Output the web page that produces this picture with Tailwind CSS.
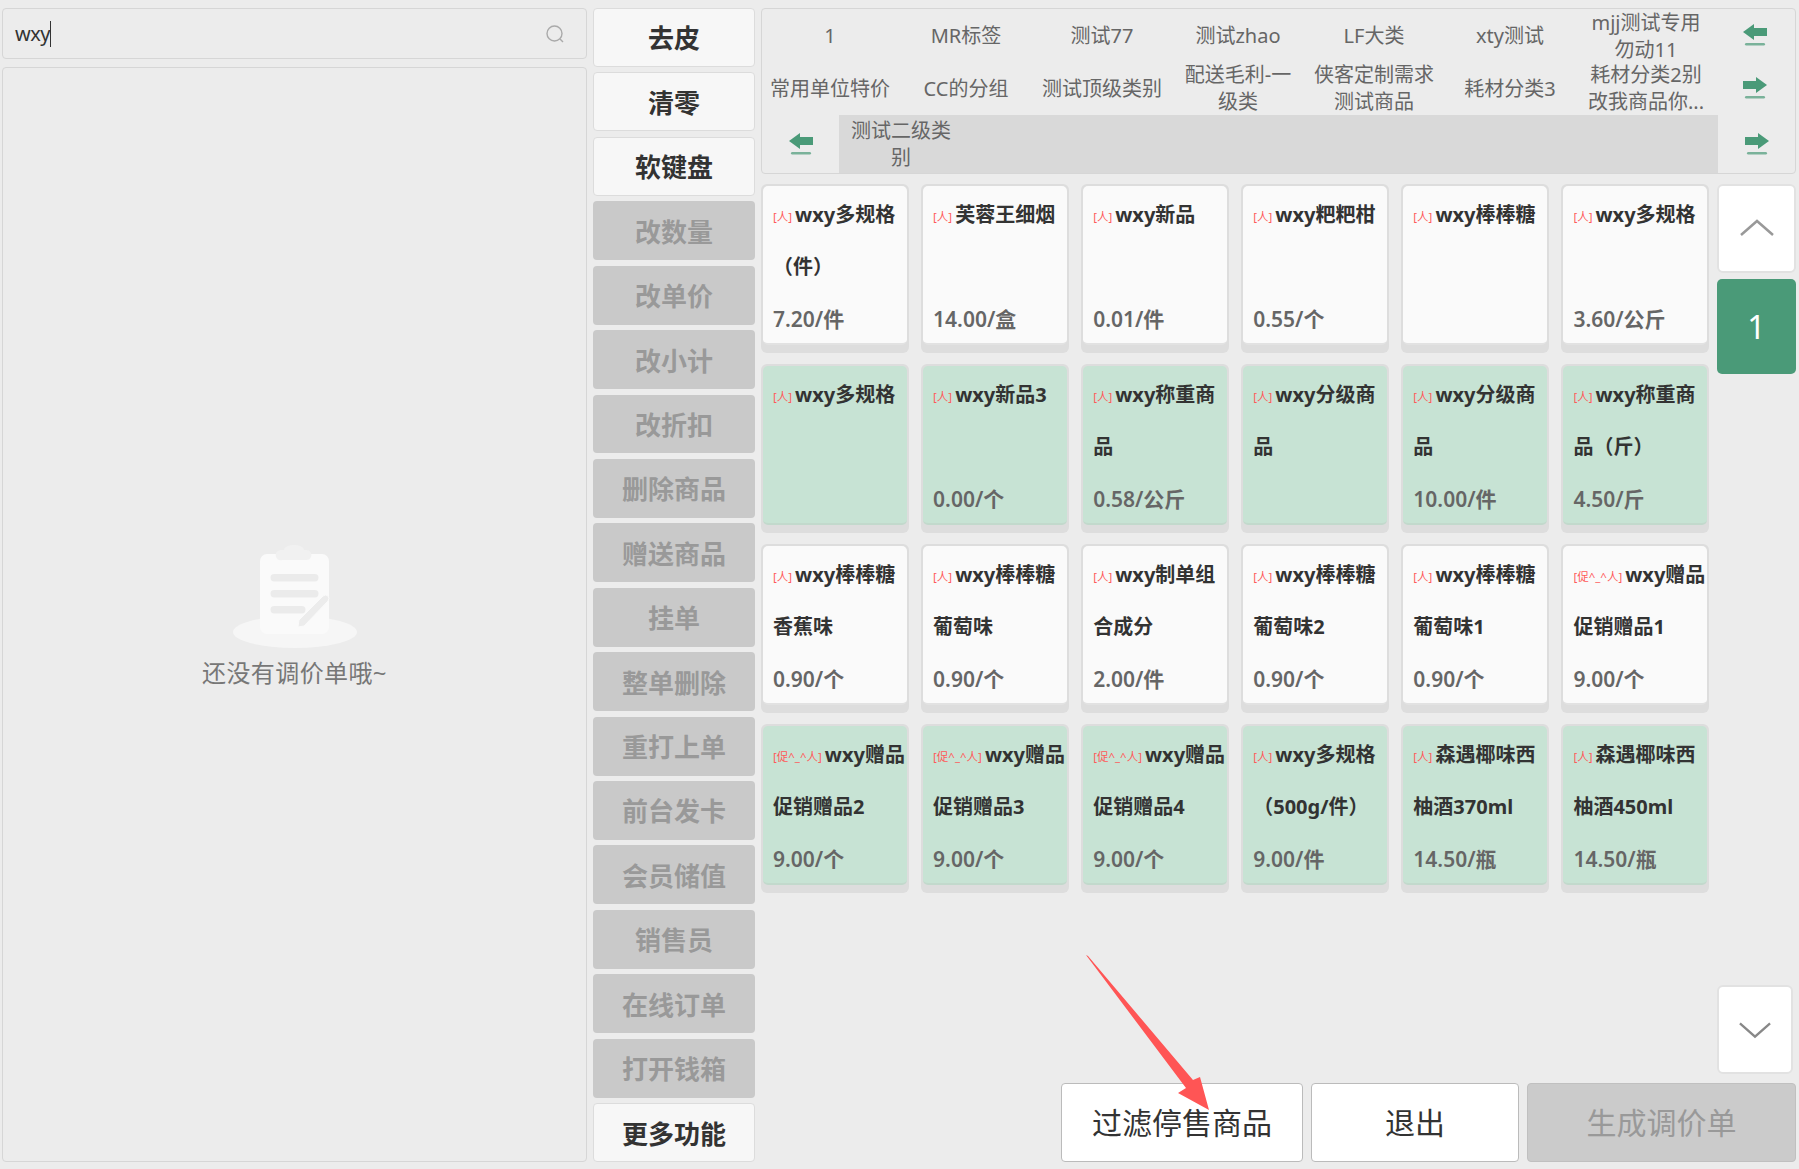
<!DOCTYPE html>
<html lang="zh-CN">
<head>
    <meta charset="UTF-8">
    <title>调价单</title>
    <script src="https://cdn.jsdelivr.net/npm/@tailwindcss/browser@4"></script>
</head>
<body class="bg-[#ececec] font-['Noto_Sans','Noto_Sans_CJK_SC',sans-serif] overflow-hidden">
    <div class="relative h-[1169px] w-[1799px] flex pl-[2px] pr-[3px] pt-[8px] pb-[7px] gap-[6px]">
        <!-- Left: search and order list -->
        <div class="w-[585px] flex flex-col gap-[8px]">
            <div class="h-[51px] flex items-center px-[12px] border border-[#d6d6d6] rounded-[4px]">
                <span class="text-[20px] text-[#333] tracking-[-0.5px]">wxy</span>
                <span class="w-px h-[26px] bg-[#333]"></span>
                <svg class="ml-auto mr-[9px] w-[20px] h-[20px]" viewBox="0 0 20 20" fill="none" stroke="#aaa" stroke-width="1.4">
                    <circle cx="9.5" cy="9.5" r="7.5"></circle>
                    <path d="M15 15l3 3"></path>
                </svg>
            </div>
            <div class="flex-1 flex flex-col items-center justify-center border border-[#d6d6d6] rounded-[4px] pt-[6px]">
                <svg class="w-[126px] h-[105px]" viewBox="0 0 126 105">
                    <ellipse cx="63" cy="87" rx="62" ry="16" fill="#f6f6f6"></ellipse>
                    <rect x="28" y="9" width="69" height="80" rx="7" fill="#fafafa"></rect>
                    <path d="M47 5a5 5 0 0 1 4-1h2a10 5 0 0 1 20 0h2a5 5 0 0 1 5 7a5 5 0 0 1-5 3H51a5 5 0 0 1-4-9z" fill="#f1f1f1" transform="translate(-1 1)"></path>
                    <rect x="38.500" y="29" width="48" height="7.500" rx="3.700" fill="#ebebeb"></rect>
                    <rect x="38.500" y="45" width="48" height="7.500" rx="3.700" fill="#ebebeb"></rect>
                    <rect x="38.500" y="61" width="35" height="7.500" rx="3.700" fill="#ebebeb"></rect>
                    <path d="M66 82l1-7 24-24q3-2 5 0t0 5L72 81z" fill="#ececec" stroke="#fafafa" stroke-width="1"></path>
                </svg>
                <p class="mt-[6px] text-[24px] leading-[34px] text-[#777] tracking-[0.4px]">还没有调价单哦~</p>
            </div>
        </div>

        <!-- Middle: function buttons -->
        <div class="w-[162px] grid grid-rows-18 gap-[5.5px] text-[26px] font-bold *:pt-[3px]">
            <button class="border border-[#dcdcdc] rounded-[4px] bg-[#f7f7f7] text-[#333]">去皮</button>
            <button class="border border-[#dcdcdc] rounded-[4px] bg-[#f7f7f7] text-[#333]">清零</button>
            <button class="border border-[#dcdcdc] rounded-[4px] bg-[#f7f7f7] text-[#333]">软键盘</button>
            <button class="rounded-[4px] bg-[#c9c9c9] text-[#999]">改数量</button>
            <button class="rounded-[4px] bg-[#c9c9c9] text-[#999]">改单价</button>
            <button class="rounded-[4px] bg-[#c9c9c9] text-[#999]">改小计</button>
            <button class="rounded-[4px] bg-[#c9c9c9] text-[#999]">改折扣</button>
            <button class="rounded-[4px] bg-[#c9c9c9] text-[#999]">删除商品</button>
            <button class="rounded-[4px] bg-[#c9c9c9] text-[#999]">赠送商品</button>
            <button class="rounded-[4px] bg-[#c9c9c9] text-[#999]">挂单</button>
            <button class="rounded-[4px] bg-[#c9c9c9] text-[#999]">整单删除</button>
            <button class="rounded-[4px] bg-[#c9c9c9] text-[#999]">重打上单</button>
            <button class="rounded-[4px] bg-[#c9c9c9] text-[#999]">前台发卡</button>
            <button class="rounded-[4px] bg-[#c9c9c9] text-[#999]">会员储值</button>
            <button class="rounded-[4px] bg-[#c9c9c9] text-[#999]">销售员</button>
            <button class="rounded-[4px] bg-[#c9c9c9] text-[#999]">在线订单</button>
            <button class="rounded-[4px] bg-[#c9c9c9] text-[#999]">打开钱箱</button>
            <button class="border border-[#dcdcdc] rounded-[4px] bg-[#f7f7f7] text-[#333]">更多功能</button>
        </div>

        <!-- Right: categories, products, actions -->
        <div class="flex-1 flex flex-col min-w-0">
            <div class="h-[166px] flex flex-col border border-[#d6d6d6] rounded-[4px] overflow-hidden text-[20px] leading-[27px] text-[#666] text-center">
                <div class="h-[53px] flex items-center">
                    <div class="w-[136px]">1</div>
                    <div class="w-[136px]">MR标签</div>
                    <div class="w-[136px]">测试77</div>
                    <div class="w-[136px]">测试zhao</div>
                    <div class="w-[136px]">LF大类</div>
                    <div class="w-[136px]">xty测试</div>
                    <div class="w-[136px]">mjj测试专用<br>勿动11</div>
                    <div class="flex-1 flex justify-center">
                        <svg class="w-[24px] h-[23px]" viewBox="0 0 24 23" fill="#4a9a78"><path d="M0 8L11 0v4h13v8H11v4z"></path><rect x="2" y="19" width="20" height="2.500" rx="1.200" opacity=".7"></rect></svg>
                    </div>
                </div>
                <div class="h-[52px] flex items-center">
                    <div class="w-[136px]">常用单位特价</div>
                    <div class="w-[136px]">CC的分组</div>
                    <div class="w-[136px]">测试顶级类别</div>
                    <div class="w-[136px]">配送毛利-一<br>级类</div>
                    <div class="w-[136px]">侠客定制需求<br>测试商品</div>
                    <div class="w-[136px]">耗材分类3</div>
                    <div class="w-[136px]">耗材分类2别<br>改我商品你...</div>
                    <div class="flex-1 flex justify-center">
                        <svg class="w-[24px] h-[23px]" viewBox="0 0 24 23" fill="#4a9a78"><path d="M24 8L13 0v4H0v8h13v4z"></path><rect x="2" y="19" width="20" height="2.500" rx="1.200" opacity=".7"></rect></svg>
                    </div>
                </div>
                <div class="flex-1 flex items-center mt-[1px]">
                    <div class="w-[77px] flex justify-center">
                        <svg class="w-[24px] h-[23px]" viewBox="0 0 24 23" fill="#4a9a78"><path d="M0 8L11 0v4h13v8H11v4z"></path><rect x="2" y="19" width="20" height="2.500" rx="1.200" opacity=".7"></rect></svg>
                    </div>
                    <div class="w-[879px] self-stretch bg-[#d9d9d9] flex items-center">
                        <div class="w-[124px]">测试二级类<br>别</div>
                    </div>
                    <div class="flex-1 flex justify-center">
                        <svg class="w-[24px] h-[23px]" viewBox="0 0 24 23" fill="#4a9a78"><path d="M24 8L13 0v4H0v8h13v4z"></path><rect x="2" y="19" width="20" height="2.500" rx="1.200" opacity=".7"></rect></svg>
                    </div>
                </div>
            </div>

            <div class="flex-1 flex mt-[10px] pb-[9px] gap-[8px] min-h-0">
                <div class="w-[948px] grid grid-cols-6 gap-x-[12.5px] gap-y-[11px] content-start">
                    <div class="h-[169px] bg-[#dddddd] rounded-[6px] px-[2px] pt-[2px] pb-[8px]"><div class="h-full rounded-[5px] bg-[#fafafa] border-b-2 border-[#e2e2e2] pl-[10px] pt-[4px] text-[20px] whitespace-nowrap text-[#333] font-bold"><div class="h-[103px] leading-[50px]"><span class="mr-[3px] align-[1px] text-[11.5px] font-normal text-[#ff5a5a]">[人]</span>wxy多规格<br>（件）</div><div class="leading-[52px] text-[21px] font-semibold text-[#666]">7.20/件</div></div></div>
                    <div class="h-[169px] bg-[#dddddd] rounded-[6px] px-[2px] pt-[2px] pb-[8px]"><div class="h-full rounded-[5px] bg-[#fafafa] border-b-2 border-[#e2e2e2] pl-[10px] pt-[4px] text-[20px] whitespace-nowrap text-[#333] font-bold"><div class="h-[103px] leading-[50px]"><span class="mr-[3px] align-[1px] text-[11.5px] font-normal text-[#ff5a5a]">[人]</span>芙蓉王细烟</div><div class="leading-[52px] text-[21px] font-semibold text-[#666]">14.00/盒</div></div></div>
                    <div class="h-[169px] bg-[#dddddd] rounded-[6px] px-[2px] pt-[2px] pb-[8px]"><div class="h-full rounded-[5px] bg-[#fafafa] border-b-2 border-[#e2e2e2] pl-[10px] pt-[4px] text-[20px] whitespace-nowrap text-[#333] font-bold"><div class="h-[103px] leading-[50px]"><span class="mr-[3px] align-[1px] text-[11.5px] font-normal text-[#ff5a5a]">[人]</span>wxy新品</div><div class="leading-[52px] text-[21px] font-semibold text-[#666]">0.01/件</div></div></div>
                    <div class="h-[169px] bg-[#dddddd] rounded-[6px] px-[2px] pt-[2px] pb-[8px]"><div class="h-full rounded-[5px] bg-[#fafafa] border-b-2 border-[#e2e2e2] pl-[10px] pt-[4px] text-[20px] whitespace-nowrap text-[#333] font-bold"><div class="h-[103px] leading-[50px]"><span class="mr-[3px] align-[1px] text-[11.5px] font-normal text-[#ff5a5a]">[人]</span>wxy粑粑柑</div><div class="leading-[52px] text-[21px] font-semibold text-[#666]">0.55/个</div></div></div>
                    <div class="h-[169px] bg-[#dddddd] rounded-[6px] px-[2px] pt-[2px] pb-[8px]"><div class="h-full rounded-[5px] bg-[#fafafa] border-b-2 border-[#e2e2e2] pl-[10px] pt-[4px] text-[20px] whitespace-nowrap text-[#333] font-bold"><div class="h-[103px] leading-[50px]"><span class="mr-[3px] align-[1px] text-[11.5px] font-normal text-[#ff5a5a]">[人]</span>wxy棒棒糖</div></div></div>
                    <div class="h-[169px] bg-[#dddddd] rounded-[6px] px-[2px] pt-[2px] pb-[8px]"><div class="h-full rounded-[5px] bg-[#fafafa] border-b-2 border-[#e2e2e2] pl-[10px] pt-[4px] text-[20px] whitespace-nowrap text-[#333] font-bold"><div class="h-[103px] leading-[50px]"><span class="mr-[3px] align-[1px] text-[11.5px] font-normal text-[#ff5a5a]">[人]</span>wxy多规格</div><div class="leading-[52px] text-[21px] font-semibold text-[#666]">3.60/公斤</div></div></div>

                    <div class="h-[169px] bg-[#dddddd] rounded-[6px] px-[2px] pt-[2px] pb-[8px]"><div class="h-full rounded-[5px] bg-[#c7e3d4] border-b-2 border-[#c2d9cc] pl-[10px] pt-[4px] text-[20px] whitespace-nowrap text-[#333] font-bold"><div class="h-[103px] leading-[50px]"><span class="mr-[3px] align-[1px] text-[11.5px] font-normal text-[#ff5a5a]">[人]</span>wxy多规格</div></div></div>
                    <div class="h-[169px] bg-[#dddddd] rounded-[6px] px-[2px] pt-[2px] pb-[8px]"><div class="h-full rounded-[5px] bg-[#c7e3d4] border-b-2 border-[#c2d9cc] pl-[10px] pt-[4px] text-[20px] whitespace-nowrap text-[#333] font-bold"><div class="h-[103px] leading-[50px]"><span class="mr-[3px] align-[1px] text-[11.5px] font-normal text-[#ff5a5a]">[人]</span>wxy新品3</div><div class="leading-[52px] text-[21px] font-semibold text-[#666]">0.00/个</div></div></div>
                    <div class="h-[169px] bg-[#dddddd] rounded-[6px] px-[2px] pt-[2px] pb-[8px]"><div class="h-full rounded-[5px] bg-[#c7e3d4] border-b-2 border-[#c2d9cc] pl-[10px] pt-[4px] text-[20px] whitespace-nowrap text-[#333] font-bold"><div class="h-[103px] leading-[50px]"><span class="mr-[3px] align-[1px] text-[11.5px] font-normal text-[#ff5a5a]">[人]</span>wxy称重商<br>品</div><div class="leading-[52px] text-[21px] font-semibold text-[#666]">0.58/公斤</div></div></div>
                    <div class="h-[169px] bg-[#dddddd] rounded-[6px] px-[2px] pt-[2px] pb-[8px]"><div class="h-full rounded-[5px] bg-[#c7e3d4] border-b-2 border-[#c2d9cc] pl-[10px] pt-[4px] text-[20px] whitespace-nowrap text-[#333] font-bold"><div class="h-[103px] leading-[50px]"><span class="mr-[3px] align-[1px] text-[11.5px] font-normal text-[#ff5a5a]">[人]</span>wxy分级商<br>品</div></div></div>
                    <div class="h-[169px] bg-[#dddddd] rounded-[6px] px-[2px] pt-[2px] pb-[8px]"><div class="h-full rounded-[5px] bg-[#c7e3d4] border-b-2 border-[#c2d9cc] pl-[10px] pt-[4px] text-[20px] whitespace-nowrap text-[#333] font-bold"><div class="h-[103px] leading-[50px]"><span class="mr-[3px] align-[1px] text-[11.5px] font-normal text-[#ff5a5a]">[人]</span>wxy分级商<br>品</div><div class="leading-[52px] text-[21px] font-semibold text-[#666]">10.00/件</div></div></div>
                    <div class="h-[169px] bg-[#dddddd] rounded-[6px] px-[2px] pt-[2px] pb-[8px]"><div class="h-full rounded-[5px] bg-[#c7e3d4] border-b-2 border-[#c2d9cc] pl-[10px] pt-[4px] text-[20px] whitespace-nowrap text-[#333] font-bold"><div class="h-[103px] leading-[50px]"><span class="mr-[3px] align-[1px] text-[11.5px] font-normal text-[#ff5a5a]">[人]</span>wxy称重商<br>品（斤）</div><div class="leading-[52px] text-[21px] font-semibold text-[#666]">4.50/斤</div></div></div>

                    <div class="h-[169px] bg-[#dddddd] rounded-[6px] px-[2px] pt-[2px] pb-[8px]"><div class="h-full rounded-[5px] bg-[#fafafa] border-b-2 border-[#e2e2e2] pl-[10px] pt-[4px] text-[20px] whitespace-nowrap text-[#333] font-bold"><div class="h-[103px] leading-[50px]"><span class="mr-[3px] align-[1px] text-[11.5px] font-normal text-[#ff5a5a]">[人]</span>wxy棒棒糖<br>香蕉味</div><div class="leading-[52px] text-[21px] font-semibold text-[#666]">0.90/个</div></div></div>
                    <div class="h-[169px] bg-[#dddddd] rounded-[6px] px-[2px] pt-[2px] pb-[8px]"><div class="h-full rounded-[5px] bg-[#fafafa] border-b-2 border-[#e2e2e2] pl-[10px] pt-[4px] text-[20px] whitespace-nowrap text-[#333] font-bold"><div class="h-[103px] leading-[50px]"><span class="mr-[3px] align-[1px] text-[11.5px] font-normal text-[#ff5a5a]">[人]</span>wxy棒棒糖<br>葡萄味</div><div class="leading-[52px] text-[21px] font-semibold text-[#666]">0.90/个</div></div></div>
                    <div class="h-[169px] bg-[#dddddd] rounded-[6px] px-[2px] pt-[2px] pb-[8px]"><div class="h-full rounded-[5px] bg-[#fafafa] border-b-2 border-[#e2e2e2] pl-[10px] pt-[4px] text-[20px] whitespace-nowrap text-[#333] font-bold"><div class="h-[103px] leading-[50px]"><span class="mr-[3px] align-[1px] text-[11.5px] font-normal text-[#ff5a5a]">[人]</span>wxy制单组<br>合成分</div><div class="leading-[52px] text-[21px] font-semibold text-[#666]">2.00/件</div></div></div>
                    <div class="h-[169px] bg-[#dddddd] rounded-[6px] px-[2px] pt-[2px] pb-[8px]"><div class="h-full rounded-[5px] bg-[#fafafa] border-b-2 border-[#e2e2e2] pl-[10px] pt-[4px] text-[20px] whitespace-nowrap text-[#333] font-bold"><div class="h-[103px] leading-[50px]"><span class="mr-[3px] align-[1px] text-[11.5px] font-normal text-[#ff5a5a]">[人]</span>wxy棒棒糖<br>葡萄味2</div><div class="leading-[52px] text-[21px] font-semibold text-[#666]">0.90/个</div></div></div>
                    <div class="h-[169px] bg-[#dddddd] rounded-[6px] px-[2px] pt-[2px] pb-[8px]"><div class="h-full rounded-[5px] bg-[#fafafa] border-b-2 border-[#e2e2e2] pl-[10px] pt-[4px] text-[20px] whitespace-nowrap text-[#333] font-bold"><div class="h-[103px] leading-[50px]"><span class="mr-[3px] align-[1px] text-[11.5px] font-normal text-[#ff5a5a]">[人]</span>wxy棒棒糖<br>葡萄味1</div><div class="leading-[52px] text-[21px] font-semibold text-[#666]">0.90/个</div></div></div>
                    <div class="h-[169px] bg-[#dddddd] rounded-[6px] px-[2px] pt-[2px] pb-[8px]"><div class="h-full rounded-[5px] bg-[#fafafa] border-b-2 border-[#e2e2e2] pl-[10px] pt-[4px] text-[20px] whitespace-nowrap text-[#333] font-bold"><div class="h-[103px] leading-[50px]"><span class="mr-[3px] align-[1px] text-[11.5px] font-normal text-[#ff5a5a]">[促^_^人]</span>wxy赠品<br>促销赠品1</div><div class="leading-[52px] text-[21px] font-semibold text-[#666]">9.00/个</div></div></div>

                    <div class="h-[169px] bg-[#dddddd] rounded-[6px] px-[2px] pt-[2px] pb-[8px]"><div class="h-full rounded-[5px] bg-[#c7e3d4] border-b-2 border-[#c2d9cc] pl-[10px] pt-[4px] text-[20px] whitespace-nowrap text-[#333] font-bold"><div class="h-[103px] leading-[50px]"><span class="mr-[3px] align-[1px] text-[11.5px] font-normal text-[#ff5a5a]">[促^_^人]</span>wxy赠品<br>促销赠品2</div><div class="leading-[52px] text-[21px] font-semibold text-[#666]">9.00/个</div></div></div>
                    <div class="h-[169px] bg-[#dddddd] rounded-[6px] px-[2px] pt-[2px] pb-[8px]"><div class="h-full rounded-[5px] bg-[#c7e3d4] border-b-2 border-[#c2d9cc] pl-[10px] pt-[4px] text-[20px] whitespace-nowrap text-[#333] font-bold"><div class="h-[103px] leading-[50px]"><span class="mr-[3px] align-[1px] text-[11.5px] font-normal text-[#ff5a5a]">[促^_^人]</span>wxy赠品<br>促销赠品3</div><div class="leading-[52px] text-[21px] font-semibold text-[#666]">9.00/个</div></div></div>
                    <div class="h-[169px] bg-[#dddddd] rounded-[6px] px-[2px] pt-[2px] pb-[8px]"><div class="h-full rounded-[5px] bg-[#c7e3d4] border-b-2 border-[#c2d9cc] pl-[10px] pt-[4px] text-[20px] whitespace-nowrap text-[#333] font-bold"><div class="h-[103px] leading-[50px]"><span class="mr-[3px] align-[1px] text-[11.5px] font-normal text-[#ff5a5a]">[促^_^人]</span>wxy赠品<br>促销赠品4</div><div class="leading-[52px] text-[21px] font-semibold text-[#666]">9.00/个</div></div></div>
                    <div class="h-[169px] bg-[#dddddd] rounded-[6px] px-[2px] pt-[2px] pb-[8px]"><div class="h-full rounded-[5px] bg-[#c7e3d4] border-b-2 border-[#c2d9cc] pl-[10px] pt-[4px] text-[20px] whitespace-nowrap text-[#333] font-bold"><div class="h-[103px] leading-[50px]"><span class="mr-[3px] align-[1px] text-[11.5px] font-normal text-[#ff5a5a]">[人]</span>wxy多规格<br>（500g/件）</div><div class="leading-[52px] text-[21px] font-semibold text-[#666]">9.00/件</div></div></div>
                    <div class="h-[169px] bg-[#dddddd] rounded-[6px] px-[2px] pt-[2px] pb-[8px]"><div class="h-full rounded-[5px] bg-[#c7e3d4] border-b-2 border-[#c2d9cc] pl-[10px] pt-[4px] text-[20px] whitespace-nowrap text-[#333] font-bold"><div class="h-[103px] leading-[50px]"><span class="mr-[3px] align-[1px] text-[11.5px] font-normal text-[#ff5a5a]">[人]</span>森遇椰味西<br>柚酒370ml</div><div class="leading-[52px] text-[21px] font-semibold text-[#666]">14.50/瓶</div></div></div>
                    <div class="h-[169px] bg-[#dddddd] rounded-[6px] px-[2px] pt-[2px] pb-[8px]"><div class="h-full rounded-[5px] bg-[#c7e3d4] border-b-2 border-[#c2d9cc] pl-[10px] pt-[4px] text-[20px] whitespace-nowrap text-[#333] font-bold"><div class="h-[103px] leading-[50px]"><span class="mr-[3px] align-[1px] text-[11.5px] font-normal text-[#ff5a5a]">[人]</span>森遇椰味西<br>柚酒450ml</div><div class="leading-[52px] text-[21px] font-semibold text-[#666]">14.50/瓶</div></div></div>
                </div>

                <!-- Pager -->
                <div class="flex-1 flex flex-col">
                    <button class="h-[89px] flex items-center justify-center bg-white border-2 border-[#e2e2e2] rounded-[6px]">
                        <svg class="w-[34px] h-[18px] -mt-[1px]" viewBox="0 0 34 18" fill="none" stroke="#999" stroke-width="2.500"><path d="M1 16L17 2l16 14"></path></svg>
                    </button>
                    <button class="h-[95px] mt-[6px] bg-[#4a9a78] rounded-[5px] text-white text-[32px]">1</button>
                    <button class="mt-auto w-[76px] h-[89px] flex items-center justify-center bg-white border-2 border-[#e2e2e2] rounded-[6px]">
                        <svg class="w-[32px] h-[18px]" viewBox="0 0 34 18" fill="none" stroke="#888" stroke-width="2.500"><path d="M1 2l16 14L33 2"></path></svg>
                    </button>
                </div>
            </div>

            <!-- Actions -->
            <div class="h-[79px] flex justify-end gap-[8px] text-[30px]">
                <button class="w-[242px] bg-white border border-[#bbb] rounded-[4px] text-[#333]">过滤停售商品</button>
                <button class="w-[208px] bg-white border border-[#bbb] rounded-[4px] text-[#333]">退出</button>
                <button class="w-[269px] bg-[#cbcbcb] border border-[#c0c0c0] rounded-[4px] text-[#999]">生成调价单</button>
            </div>
        </div>

        <!-- Red annotation arrow drawn over the screenshot -->
        <svg class="absolute left-[1080px] top-[950px] w-[140px] h-[170px]" viewBox="0 0 140 170" fill="#ff5555">
            <path d="M6 5L8 6L113 130L120 127L129 160L98 143L106 138Z"></path>
        </svg>
    </div>
</body>
</html>
